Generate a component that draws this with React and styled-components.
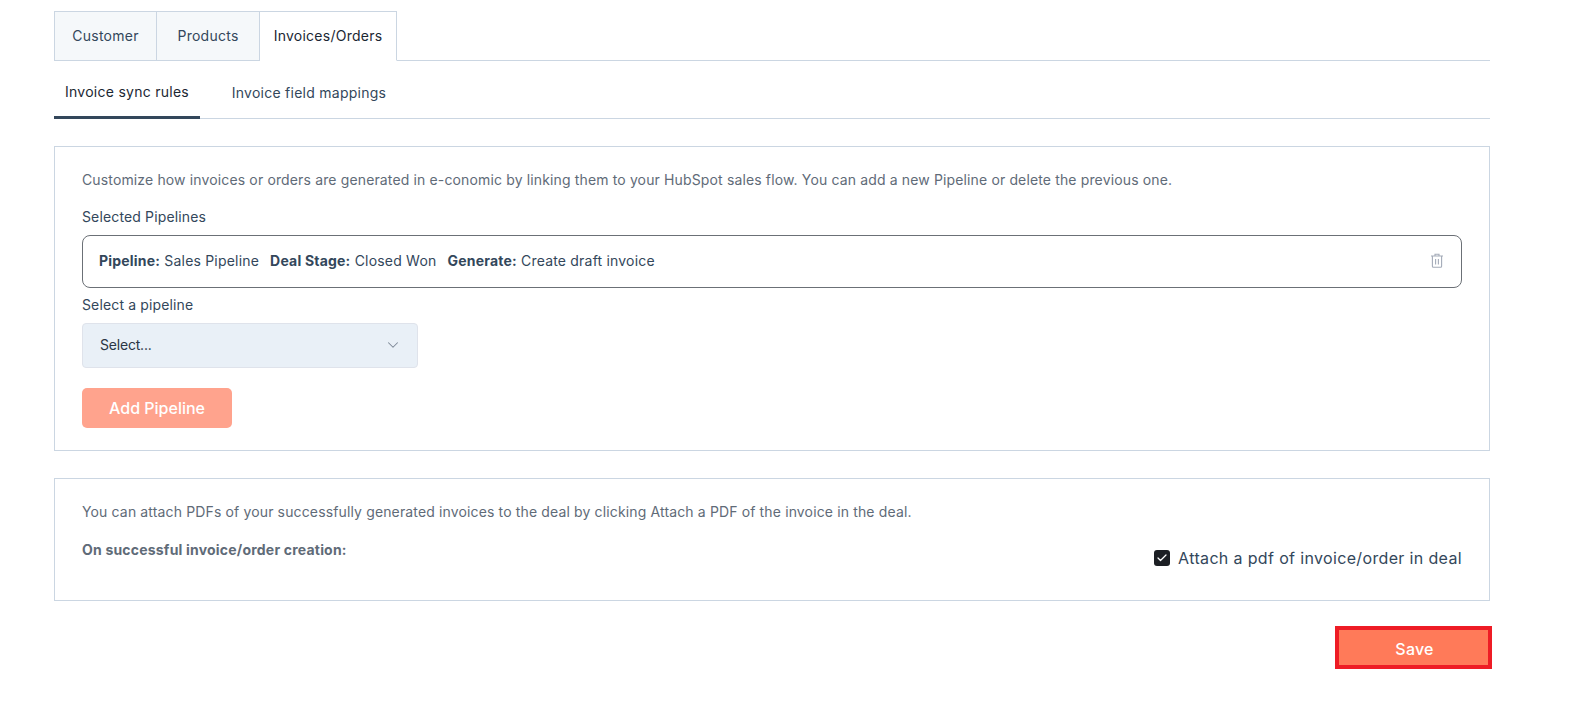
import React from "react";
import styled, { createGlobalStyle } from "styled-components";
import { ChevronDown, Check } from "lucide-react";

const GlobalStyle = createGlobalStyle`
  html, body {
    margin: 0;
    padding: 0;
    background: #fff;
    font-family: Inter, "Open Sans", "Liberation Sans", sans-serif;
    letter-spacing: 0.14px;
    color: #33475b;
  }
  * {
    box-sizing: border-box;
  }
`;

const Page = styled.div`
  width: 1491px;
  padding: 11px 0 0 54px;
`;

const TabBar = styled.div`
  display: flex;
  width: 1436px;
  height: 50px;
  border-bottom: 1px solid #cbd6e2;
`;

const Tab = styled.div`
  width: ${(p) => p.$w}px;
  height: 50px;
  padding-bottom: 2px;
  display: flex;
  align-items: center;
  justify-content: center;
  font-size: 14px;
  letter-spacing: 0.25px;
  border: 1px solid #cbd6e2;
  border-left-width: ${(p) => (p.$first ? 1 : 0)}px;
  background: ${(p) => (p.$active ? "#fff" : "#f5f8fa")};
  color: ${(p) => (p.$active ? "#1b2733" : "#33475b")};
  border-bottom-color: ${(p) => (p.$active ? "#fff" : "#cbd6e2")};
`;

const SubTabBar = styled.div`
  display: flex;
  width: 1436px;
  height: 58px;
  border-bottom: 1px solid #cbd6e2;
`;

const SubTab = styled.div`
  width: ${(p) => p.$w}px;
  height: 58px;
  display: flex;
  align-items: center;
  justify-content: center;
  padding-top: ${(p) => (p.$active ? 5 : 4)}px;
  font-size: 14px;
  letter-spacing: 0.26px;
  color: ${(p) => (p.$active ? "#1b2733" : "#33475b")};
  border-bottom: ${(p) => (p.$active ? "3px solid #33475b" : "none")};
`;

const Card = styled.section`
  width: 1436px;
  height: ${(p) => p.$h}px;
  margin-top: ${(p) => p.$mt}px;
  padding: ${(p) => p.$pt}px 27px 0;
  border: 1px solid #cbd6e2;
`;

const Intro = styled.p`
  margin: 0;
  font-size: 14px;
  line-height: 20px;
  color: #5f6b78;
`;

const FieldLabel = styled.div`
  margin-top: ${(p) => p.$mt}px;
  font-size: 14px;
  line-height: 20px;
  color: #33475b;
`;

const PipelineRow = styled.div`
  display: flex;
  align-items: center;
  height: 53px;
  margin-top: 8px;
  padding: 0 17px 2px 16px;
  border: 1px solid #6b7076;
  border-radius: 8px;
  font-size: 14px;
  letter-spacing: 0.2px;
  color: #33475b;
`;

const Pair = styled.span`
  margin-right: 11px;

  b {
    font-weight: 700;
  }
`;

const TrashButton = styled.span`
  margin-left: auto;
  display: flex;
  color: #a4abb8;
`;

const SelectBox = styled.div`
  display: flex;
  align-items: center;
  justify-content: space-between;
  width: 336px;
  height: 45px;
  margin-top: 8px;
  padding: 0 15px 2px 17px;
  background: #e9f0f7;
  border: 1px solid #dfe3eb;
  border-radius: 4px;
  font-size: 14px;
  letter-spacing: -0.2px;
  color: #2a3644;

  svg {
    color: #7c8896;
  }
`;

const AddButton = styled.button`
  display: block;
  width: 150px;
  height: 40px;
  margin-top: 20px;
  padding: 0;
  border: none;
  border-radius: 5px;
  background: #ffa38d;
  color: #fff;
  font-family: inherit;
  font-size: 16px;
  font-weight: 500;
`;

const AttachRow = styled.div`
  display: flex;
  justify-content: space-between;
  margin-top: 18px;
`;

const BoldNote = styled.div`
  font-size: 14px;
  line-height: 20px;
  font-weight: 700;
  letter-spacing: 0.2px;
  color: #5f6b78;
`;

const CheckLabel = styled.label`
  display: flex;
  align-items: center;
  gap: 8px;
  height: 24px;
  margin-top: 6px;
  font-size: 16px;
  letter-spacing: 0.35px;
  color: #33475b;
`;

const CheckBox = styled.span`
  display: flex;
  align-items: center;
  justify-content: center;
  width: 16px;
  height: 16px;
  border-radius: 3px;
  background: #1c1f24;
  color: #fff;
`;

const Footer = styled.div`
  display: flex;
  justify-content: flex-end;
  width: 1438px;
  margin-top: 25px;
`;

const SaveButton = styled.button`
  width: 157px;
  height: 43px;
  padding: 2px 0 0 2px;
  border: 4px solid #ee1c25;
  background: #ff7a59;
  color: #fff;
  font-family: inherit;
  font-size: 16px;
  font-weight: 500;
  letter-spacing: 0.2px;
`;

const Trash = () => (
  <svg width="14" height="15" viewBox="0 0 14 15" fill="none" stroke="currentColor" strokeWidth="1.1">
    <path d="M1 3h12M5 3V1.2h4V3M2.4 3v10.2c0 .6.4 1 1 1h7.2c.6 0 1-.4 1-1V3M5.6 6v5.4M8.4 6v5.4" />
  </svg>
);

export default function App() {
  return (
    <Page>
      <GlobalStyle />
      <TabBar>
        <Tab $w={103} $first>Customer</Tab>
        <Tab $w={103}>Products</Tab>
        <Tab $w={137} $active>Invoices/Orders</Tab>
      </TabBar>
      <SubTabBar>
        <SubTab $w={146} $active>Invoice sync rules</SubTab>
        <SubTab $w={218}>Invoice field mappings</SubTab>
      </SubTabBar>

      <Card $h={305} $mt={27} $pt={23}>
        <Intro>
          Customize how invoices or orders are generated in e-conomic by linking them to your HubSpot sales flow. You can add a new Pipeline or delete the previous one.
        </Intro>
        <FieldLabel $mt={17}>Selected Pipelines</FieldLabel>
        <PipelineRow>
          <Pair><b>Pipeline:</b> Sales Pipeline</Pair>
          <Pair><b>Deal Stage:</b> Closed Won</Pair>
          <Pair><b>Generate:</b> Create draft invoice</Pair>
          <TrashButton><Trash /></TrashButton>
        </PipelineRow>
        <FieldLabel $mt={7}>Select a pipeline</FieldLabel>
        <SelectBox>
          Select...
          <ChevronDown size={18} strokeWidth={1.4} />
        </SelectBox>
        <AddButton>Add Pipeline</AddButton>
      </Card>

      <Card $h={123} $mt={27} $pt={23}>
        <Intro>
          You can attach PDFs of your successfully generated invoices to the deal by clicking Attach a PDF of the invoice in the deal.
        </Intro>
        <AttachRow>
          <BoldNote>On successful invoice/order creation:</BoldNote>
          <CheckLabel>
            <CheckBox><Check size={12} strokeWidth={2.5} /></CheckBox>
            Attach a pdf of invoice/order in deal
          </CheckLabel>
        </AttachRow>
      </Card>

      <Footer>
        <SaveButton>Save</SaveButton>
      </Footer>
    </Page>
  );
}
